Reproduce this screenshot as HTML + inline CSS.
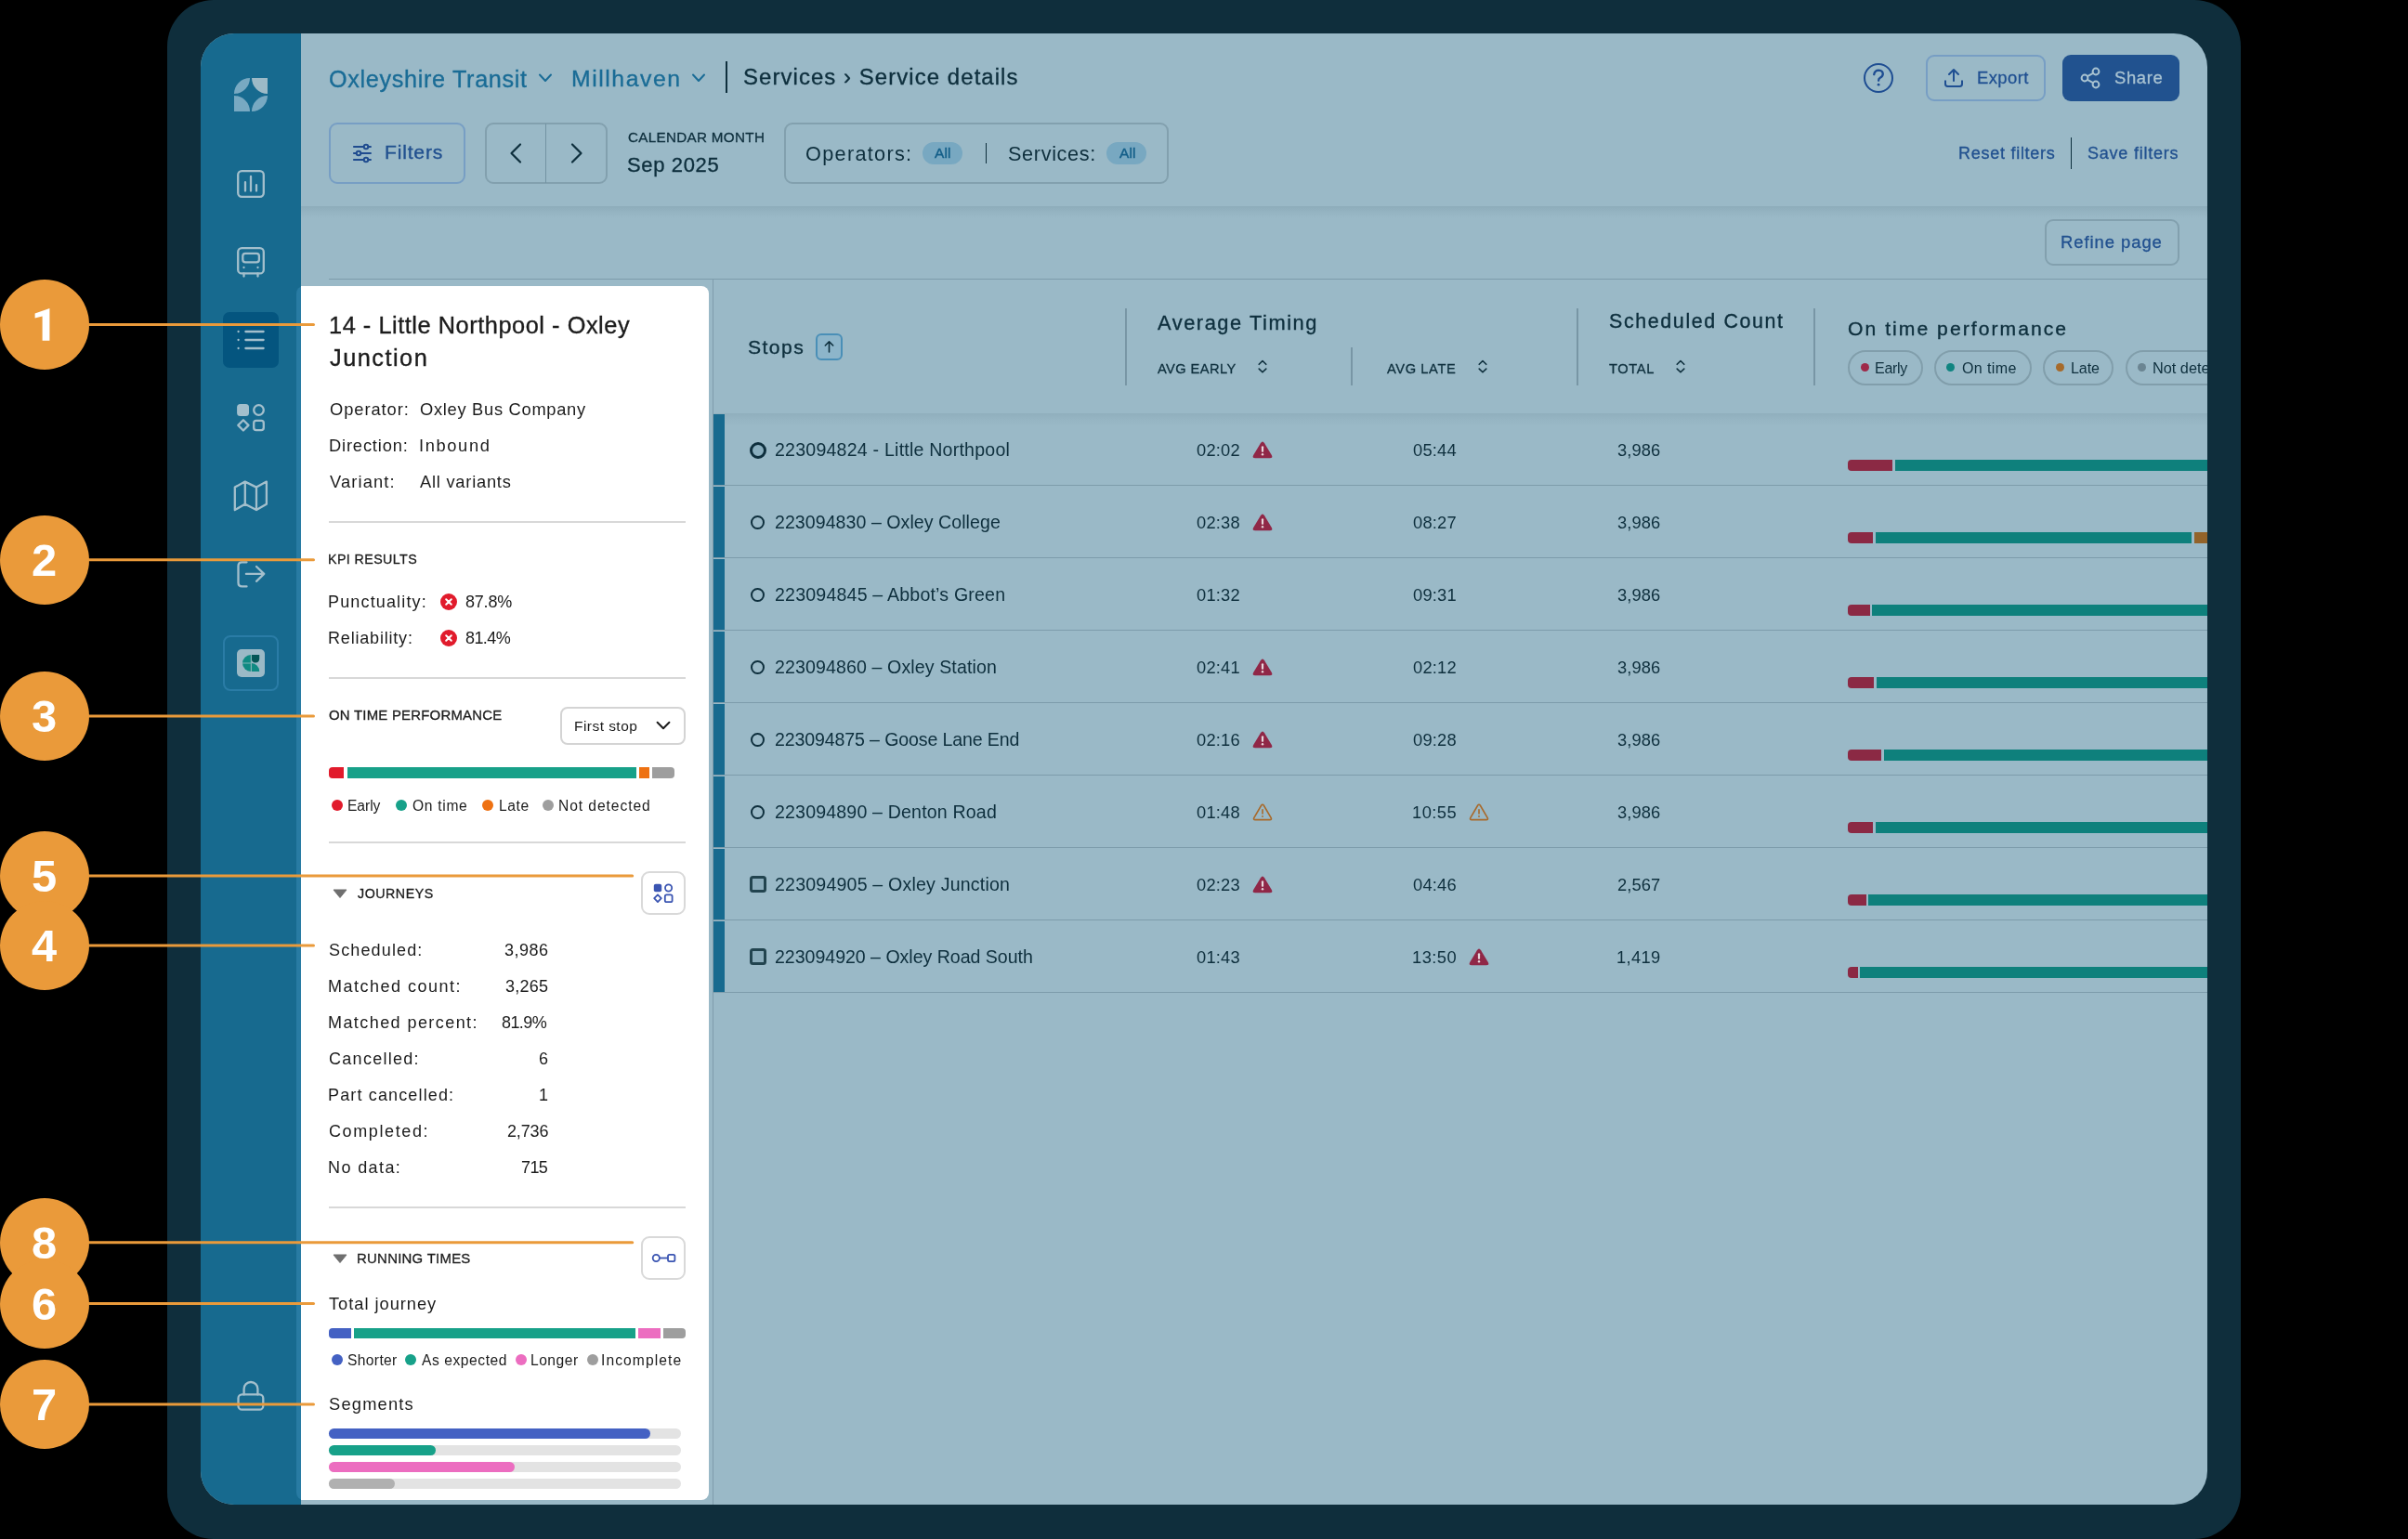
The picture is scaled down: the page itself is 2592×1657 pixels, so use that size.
<!DOCTYPE html>
<html><head><meta charset="utf-8"><title>Service details</title>
<style>
html,body{margin:0;padding:0}
body{width:2592px;height:1657px;background:#000;position:relative;overflow:hidden;font-family:"Liberation Sans",sans-serif}
.a{position:absolute;box-sizing:border-box}
.t{position:absolute;white-space:nowrap;line-height:1;will-change:transform}
svg{position:absolute;overflow:visible}
</style></head><body>

<div class="a" style="left:180px;top:0;width:2232px;height:1657px;background:#0f2e3c;border-radius:50px"></div>
<div class="a" style="left:216px;top:36px;width:2160px;height:1584px;background:#9ab9c7;border-radius:36px;overflow:hidden">
<div class="a" style="left:0;top:0;width:108px;height:1584px;background:#176a8f"></div>
</div>
<div class="a" style="left:324px;top:222px;width:2052px;height:13px;background:linear-gradient(rgba(40,70,85,0.11),rgba(40,70,85,0.05) 45%,rgba(40,70,85,0))"></div>
<div class="t" style="left:353.50px;top:72.52px;font-size:25.21px;color:#1a6c96;letter-spacing:0.668px;-webkit-text-stroke:0.35px #1a6c96">Oxleyshire Transit</div>
<svg style="left:580px;top:79px" width="14" height="10" viewBox="0 0 14 10"><path d="M1 1.5 L7 8 L13 1.5" fill="none" stroke="#1a6c96" stroke-width="2" stroke-linecap="round" stroke-linejoin="round"/></svg>
<div class="t" style="left:615.30px;top:72.78px;font-size:24.79px;color:#1a6c96;letter-spacing:1.545px;-webkit-text-stroke:0.35px #1a6c96">Millhaven</div>
<svg style="left:745px;top:79px" width="14" height="10" viewBox="0 0 14 10"><path d="M1 1.5 L7 8 L13 1.5" fill="none" stroke="#1a6c96" stroke-width="2" stroke-linecap="round" stroke-linejoin="round"/></svg>
<div class="a" style="left:781.4px;top:66px;width:1.3px;height:34px;background:#0e2f3d"></div>
<div class="t" style="left:799.50px;top:71.39px;font-size:23.94px;color:#0e2f3d;letter-spacing:1.070px;-webkit-text-stroke:0.35px #0e2f3d">Services › Service details</div>
<svg style="left:2005px;top:67px" width="34" height="34" viewBox="0 0 34 34"><circle cx="17" cy="17" r="15" fill="none" stroke="#1e4d92" stroke-width="2"/><path d="M12.2 13.2 Q13 8.6 17.3 8.6 Q21.6 8.9 21.8 12.6 Q21.8 15.3 18.8 16.8 Q17.1 17.7 17.1 19.8" fill="none" stroke="#1e4d92" stroke-width="2.3" stroke-linecap="round"/><circle cx="17.1" cy="24.2" r="1.4" fill="#1e4d92"/></svg>
<div class="a" style="left:2073px;top:59px;width:129px;height:50px;border:2px solid #779ec4;border-radius:9px"></div>
<svg style="left:2092px;top:72px" width="22" height="24" viewBox="0 0 22 24"><path d="M11 15 V3 M6 8 L11 3 L16 8" fill="none" stroke="#1f4f92" stroke-width="2" stroke-linecap="round" stroke-linejoin="round"/><path d="M2 14.4 V18.6 Q2 21 4.5 21 H17.5 Q20 21 20 18.6 V14.4" fill="none" stroke="#1f4f92" stroke-width="2" stroke-linecap="butt"/></svg>
<div class="t" style="left:2127.50px;top:75.00px;font-size:18.45px;color:#1f4f91;letter-spacing:0.407px;-webkit-text-stroke:0.3px #1f4f91">Export</div>
<div class="a" style="left:2220px;top:58.7px;width:126px;height:50.5px;background:#21528f;border-radius:9px"></div>
<svg style="left:2238px;top:71px" width="24" height="26" viewBox="0 0 24 26"><circle cx="18" cy="6" r="3.4" fill="none" stroke="#a9c3d1" stroke-width="2"/><circle cx="6" cy="13" r="3.4" fill="none" stroke="#a9c3d1" stroke-width="2"/><circle cx="18" cy="20" r="3.4" fill="none" stroke="#a9c3d1" stroke-width="2"/><path d="M9 11.2 L15 7.8 M9 14.8 L15 18.2" stroke="#a9c3d1" stroke-width="2"/></svg>
<div class="t" style="left:2275.50px;top:75.00px;font-size:18.45px;color:#a9c3d2;letter-spacing:0.639px;-webkit-text-stroke:0.3px #a9c3d2">Share</div>
<div class="a" style="left:354px;top:132px;width:147px;height:65.5px;border:2px solid #779ec4;border-radius:9px"></div>
<svg style="left:378px;top:153px" width="24" height="24" viewBox="0 0 24 24"><g fill="none" stroke="#1f4b8f" stroke-width="1.9" stroke-linecap="round"><path d="M2.9 5 H13.7 M18.3 5 H21 M2.9 12 H5.7 M10.3 12 H21 M2.9 19 H13.7 M18.3 19 H21"/><circle cx="16" cy="5" r="2.3"/><circle cx="8" cy="12" r="2.3"/><circle cx="16" cy="19" r="2.3"/></g></svg>
<div class="t" style="left:414.00px;top:153.25px;font-size:21.13px;color:#21508f;letter-spacing:0.799px;-webkit-text-stroke:0.35px #21508f">Filters</div>
<div class="a" style="left:522.4px;top:132px;width:131.5px;height:65.5px;border:2px solid #82a0ae;border-radius:9px"></div>
<div class="a" style="left:586.7px;top:133px;width:1.5px;height:63.5px;background:#7393a3"></div>
<svg style="left:547px;top:153px" width="16" height="24" viewBox="0 0 16 24"><path d="M13 2.5 L3.5 12 L13 21.5" fill="none" stroke="#0e2f3d" stroke-width="2.2" stroke-linecap="round" stroke-linejoin="round"/></svg>
<svg style="left:613px;top:153px" width="16" height="24" viewBox="0 0 16 24"><path d="M3 2.5 L12.5 12 L3 21.5" fill="none" stroke="#0e2f3d" stroke-width="2.2" stroke-linecap="round" stroke-linejoin="round"/></svg>
<div class="t" style="left:675.50px;top:140.42px;font-size:15.21px;color:#0e2f3d;letter-spacing:0.317px;-webkit-text-stroke:0.3px #0e2f3d">CALENDAR MONTH</div>
<div class="t" style="left:674.50px;top:166.54px;font-size:21.97px;color:#0e2f3d;letter-spacing:0.665px;-webkit-text-stroke:0.35px #0e2f3d">Sep 2025</div>
<div class="a" style="left:843.6px;top:132px;width:414.5px;height:65.5px;border:2px solid #82a0ae;border-radius:9px"></div>
<div class="t" style="left:866.50px;top:154.78px;font-size:21.69px;color:#0e2f3d;letter-spacing:1.297px">Operators:</div>
<div class="a" style="left:993px;top:153.2px;width:43.3px;height:23.5px;background:#78a8c1;border-radius:12px"></div>
<div class="t" style="left:1006.20px;top:156.99px;font-size:15.49px;color:#135e88;letter-spacing:0.116px;-webkit-text-stroke:0.4px #135e88">All</div>
<div class="a" style="left:1060.8px;top:153.8px;width:1.2px;height:21.8px;background:#0e2f3d"></div>
<div class="t" style="left:1085.00px;top:154.78px;font-size:21.69px;color:#0e2f3d;letter-spacing:0.642px">Services:</div>
<div class="a" style="left:1191px;top:153.2px;width:43.3px;height:23.5px;background:#78a8c1;border-radius:12px"></div>
<div class="t" style="left:1204.50px;top:156.99px;font-size:15.49px;color:#135e88;letter-spacing:0.116px;-webkit-text-stroke:0.4px #135e88">All</div>
<div class="t" style="left:2107.50px;top:155.66px;font-size:18.03px;color:#21508f;letter-spacing:0.725px;-webkit-text-stroke:0.3px #21508f">Reset filters</div>
<div class="a" style="left:2229.1px;top:148px;width:1.4px;height:34px;background:#0e2f3d"></div>
<div class="t" style="left:2246.80px;top:155.66px;font-size:18.03px;color:#21508f;letter-spacing:0.763px;-webkit-text-stroke:0.3px #21508f">Save filters</div>
<div class="a" style="left:2201px;top:236px;width:144.5px;height:49.5px;border:2px solid #82a0ae;border-radius:9px"></div>
<div class="t" style="left:2218.40px;top:252.00px;font-size:18.45px;color:#21508f;letter-spacing:0.942px;-webkit-text-stroke:0.3px #21508f">Refine page</div>
<div class="a" style="left:354px;top:300.2px;width:2022px;height:1.2px;background:#7d9cab"></div>
<svg style="left:252px;top:84px" width="36" height="36" viewBox="0 0 36 36"><path d="M0 17 A17 17 0 0 1 17 0 A17 17 0 0 1 0 17Z" fill="#78a9c2"/><path d="M19 0 H36 V17 A17 17 0 0 1 19 0Z" fill="#9dbac7"/><path d="M0 19 A17 17 0 0 1 17 36 H0Z" fill="#78a9c2"/><path d="M19 36 A17 17 0 0 0 36 19 A17 17 0 0 0 19 36Z" fill="#78a9c2"/></svg>
<svg style="left:255px;top:183px" width="30" height="30" viewBox="0 0 30 30"><rect x="1.2" y="1.2" width="27.6" height="27.6" rx="4" fill="none" stroke="#a3bfcc" stroke-width="2.3" stroke-linecap="round" stroke-linejoin="round"/><path d="M9 13.2 V22.6 M15 7 V22.6 M21 16.2 V22.6" fill="none" stroke="#a3bfcc" stroke-width="2.3" stroke-linecap="round" stroke-linejoin="round"/></svg>
<svg style="left:255px;top:266px" width="30" height="33" viewBox="0 0 30 33"><rect x="1.2" y="1.2" width="27.6" height="27.2" rx="4" fill="none" stroke="#a3bfcc" stroke-width="2.3" stroke-linecap="round" stroke-linejoin="round"/><rect x="6.3" y="6.8" width="17.6" height="9.6" rx="2.8" fill="none" stroke="#a3bfcc" stroke-width="2.3" stroke-linecap="round" stroke-linejoin="round"/><path d="M7.5 21.9 V22 M22.5 21.9 V22 M7.5 28.5 V31.5 M22.5 28.5 V31.5" fill="none" stroke="#a3bfcc" stroke-width="2.3" stroke-linecap="round" stroke-linejoin="round"/></svg>
<div class="a" style="left:240px;top:336px;width:60px;height:60px;background:#04557f;border-radius:7px"></div>
<svg style="left:255px;top:355px" width="30" height="21" viewBox="0 0 30 21"><path d="M9.4 2 H28.6 M9.4 11 H28.6 M9.4 20 H28.6" fill="none" stroke="#a3bfcc" stroke-width="2.3" stroke-linecap="round" stroke-linejoin="round"/><path d="M1.6 2 V2.1 M1.6 11 V11.1 M1.6 20 V20.1" fill="none" stroke="#a3bfcc" stroke-width="2.3" stroke-linecap="round" stroke-linejoin="round"/></svg>
<svg style="left:255px;top:435px" width="30" height="30" viewBox="0 0 30 30"><rect x="0.1" y="0" width="12.9" height="12.9" rx="3.5" fill="#a3bfcc"/><circle cx="23.5" cy="6.5" r="5.3" fill="none" stroke="#a3bfcc" stroke-width="2.3" stroke-linecap="round" stroke-linejoin="round"/><path d="M6.9 17.3 L12.5 22.9 L6.9 28.5 L1.3 22.9Z" fill="none" stroke="#a3bfcc" stroke-width="2.3" stroke-linecap="round" stroke-linejoin="round"/><rect x="18.2" y="17.9" width="10.6" height="10.2" rx="2.6" fill="none" stroke="#a3bfcc" stroke-width="2.3" stroke-linecap="round" stroke-linejoin="round"/></svg>
<svg style="left:252px;top:517px" width="37" height="34" viewBox="0 0 37 34"><path d="M0.8 7.6 L11.8 1.6 L24 7.6 L34.9 1.6 V25.7 L24 32.1 L11.8 25.7 L0.8 32.1Z M11.8 1.6 V25.7 M24 7.6 V32.1" fill="none" stroke="#a3bfcc" stroke-width="2.3" stroke-linecap="round" stroke-linejoin="round"/></svg>
<svg style="left:255px;top:604px" width="30" height="30" viewBox="0 0 30 30"><path d="M10.5 1.3 H5.5 Q1.5 1.3 1.5 5.5 V23.2 Q1.5 27.4 5.5 27.4 H10.5" fill="none" stroke="#a3bfcc" stroke-width="2.3" stroke-linecap="round" stroke-linejoin="round"/><path d="M9.9 13.9 H29.2 M21 6 L29.2 13.9 L21 21.8" fill="none" stroke="#a3bfcc" stroke-width="2.3" stroke-linecap="round" stroke-linejoin="round"/></svg>
<div class="a" style="left:240.2px;top:684.2px;width:59.5px;height:59.5px;border:2px solid #2a7ca6;border-radius:8px"></div>
<div class="a" style="left:255px;top:699px;width:30px;height:30px;background:#9bb9c6;border-radius:5px"></div>
<svg style="left:255px;top:699px" width="30" height="30" viewBox="0 0 30 30"><path d="M15 6 V24 A9 9 0 0 1 15 6Z" fill="#0f8a82"/><path d="M15.8 24 V15 A9 9 0 0 1 24.2 24Z" fill="#0f8a82"/><path d="M15.8 6 H24.2 V10.5 A4.3 4.3 0 0 1 19.9 14.5 A4.2 4.2 0 0 1 15.8 10.3Z" fill="#045656"/><path d="M6 15 H15.4 M15.4 6 V24" stroke="#7fb3b5" stroke-width="1.2"/></svg>
<svg style="left:255px;top:1486px" width="30" height="34" viewBox="0 0 30 34"><path d="M7.6 15.4 V9.4 A7.4 7.4 0 0 1 22.4 9.4 V15.4" fill="none" stroke="#a3bfcc" stroke-width="2.3" stroke-linecap="round" stroke-linejoin="round"/><rect x="1.5" y="15.4" width="26.8" height="16.3" rx="4" fill="none" stroke="#a3bfcc" stroke-width="2.3" stroke-linecap="round" stroke-linejoin="round"/></svg>
<div class="a" style="left:766.7px;top:301px;width:1.6px;height:1319px;background:#7e9cab"></div>
<div class="t" style="left:804.80px;top:363.35px;font-size:21.13px;color:#0e2f3d;letter-spacing:1.444px;-webkit-text-stroke:0.35px #0e2f3d">Stops</div>
<div class="a" style="left:877.7px;top:359px;width:29.5px;height:29px;border:2px solid #4a8fb7;background:#8db5ca;border-radius:6px"></div>
<svg style="left:882px;top:363px" width="21" height="21" viewBox="0 0 21 21"><path d="M10.5 16 V4.8 M6.3 9 L10.5 4.8 L14.7 9" fill="none" stroke="#0e2f3d" stroke-width="1.6" stroke-linecap="round" stroke-linejoin="round"/></svg>
<div class="a" style="left:1211.3px;top:331.5px;width:1.6px;height:83.80000000000001px;background:#7896a5"></div>
<div class="a" style="left:1454.3px;top:373.7px;width:1.6px;height:41.60000000000002px;background:#7896a5"></div>
<div class="a" style="left:1697px;top:331.5px;width:1.6px;height:83.80000000000001px;background:#7896a5"></div>
<div class="a" style="left:1952.1px;top:331.5px;width:1.6px;height:83.80000000000001px;background:#7896a5"></div>
<div class="t" style="left:1246.00px;top:336.66px;font-size:21.83px;color:#0e2f3d;letter-spacing:1.545px;-webkit-text-stroke:0.35px #0e2f3d">Average Timing</div>
<div class="t" style="left:1246.00px;top:389.90px;font-size:14.65px;color:#0e2f3d;letter-spacing:0.427px;-webkit-text-stroke:0.3px #0e2f3d">AVG EARLY</div>
<div class="t" style="left:1493.20px;top:389.90px;font-size:14.65px;color:#0e2f3d;letter-spacing:0.615px;-webkit-text-stroke:0.3px #0e2f3d">AVG LATE</div>
<div class="t" style="left:1731.50px;top:336.42px;font-size:21.41px;color:#0e2f3d;letter-spacing:1.630px;-webkit-text-stroke:0.35px #0e2f3d">Scheduled Count</div>
<div class="t" style="left:1731.50px;top:389.90px;font-size:14.65px;color:#0e2f3d;letter-spacing:0.638px;-webkit-text-stroke:0.3px #0e2f3d">TOTAL</div>
<svg style="left:1353.0px;top:387.2px" width="12" height="16" viewBox="0 0 12 16"><path d="M2.2 5.3 L6 1.5 L9.8 5.3 M2.2 10.1 L6 13.8 L9.8 10.1" fill="none" stroke="#0e2f3d" stroke-width="1.6" stroke-linecap="round" stroke-linejoin="round"/></svg>
<svg style="left:1590.0px;top:387.2px" width="12" height="16" viewBox="0 0 12 16"><path d="M2.2 5.3 L6 1.5 L9.8 5.3 M2.2 10.1 L6 13.8 L9.8 10.1" fill="none" stroke="#0e2f3d" stroke-width="1.6" stroke-linecap="round" stroke-linejoin="round"/></svg>
<svg style="left:1803.2px;top:387.2px" width="12" height="16" viewBox="0 0 12 16"><path d="M2.2 5.3 L6 1.5 L9.8 5.3 M2.2 10.1 L6 13.8 L9.8 10.1" fill="none" stroke="#0e2f3d" stroke-width="1.6" stroke-linecap="round" stroke-linejoin="round"/></svg>
<div class="t" style="left:1988.70px;top:342.55px;font-size:21.13px;color:#0e2f3d;letter-spacing:2.037px;-webkit-text-stroke:0.35px #0e2f3d">On time performance</div>
<div class="a" style="left:1980px;top:370px;width:396px;height:50px;overflow:hidden">
<div class="a" style="left:9.300000000000045px;top:6.8px;width:80.29999999999977px;height:38.4px;border:2px solid #819eab;border-radius:19.2px"></div>
<div class="a" style="left:22.799999999999955px;top:21.30000000000001px;width:9px;height:9px;background:#9e2949;border-radius:50%"></div>
<div class="t" style="left:38.40px;top:17.91px;font-size:16.06px;color:#0e2f3d;letter-spacing:-0.309px">Early</div>
<div class="a" style="left:102.29999999999981px;top:6.8px;width:104.60000000000018px;height:38.4px;border:2px solid #819eab;border-radius:19.2px"></div>
<div class="a" style="left:115.19999999999982px;top:21.30000000000001px;width:9px;height:9px;background:#0f8480;border-radius:50%"></div>
<div class="t" style="left:132.20px;top:17.91px;font-size:16.06px;color:#0e2f3d;letter-spacing:0.357px">On time</div>
<div class="a" style="left:219.00000000000009px;top:6.8px;width:76.20000000000009px;height:38.4px;border:2px solid #819eab;border-radius:19.2px"></div>
<div class="a" style="left:232.5px;top:21.30000000000001px;width:9px;height:9px;background:#a66a2a;border-radius:50%"></div>
<div class="t" style="left:248.50px;top:17.91px;font-size:16.06px;color:#0e2f3d;letter-spacing:-0.069px">Late</div>
<div class="a" style="left:307.5000000000001px;top:6.8px;width:152.89999999999992px;height:38.4px;border:2px solid #819eab;border-radius:19.2px"></div>
<div class="a" style="left:320.8000000000002px;top:21.30000000000001px;width:9px;height:9px;background:#6b8592;border-radius:50%"></div>
<div class="t" style="left:336.80px;top:17.71px;font-size:16.30px;color:#0e2f3d">Not detected</div>
</div>
<div class="a" style="left:768px;top:445px;width:1608px;height:14px;background:linear-gradient(rgba(40,70,85,0.09),rgba(40,70,85,0.04) 45%,rgba(40,70,85,0))"></div>
<div class="a" style="left:767.5px;top:445.5px;width:12.5px;height:76.9px;background:#176a8f"></div>
<div class="a" style="left:767px;top:522.1px;width:1609px;height:1.3px;background:#7d9cab"></div>
<div class="a" style="left:807px;top:475.5px;width:18px;height:18px;border:3.2px solid #0e2f3d;background:#8aaebe;border-radius:50%"></div>
<div class="t" style="left:833.80px;top:474.75px;font-size:19.58px;color:#0e2f3d;letter-spacing:0.214px">223094824 - Little Northpool</div>
<div class="t" style="left:1288.00px;top:475.82px;font-size:18.31px;color:#0e2f3d;letter-spacing:0.222px">02:02</div>
<svg style="left:1348.2px;top:475.3px" width="22" height="19" viewBox="0 0 22 19"><path d="M8.9 2.2 Q11 -1.1 13.1 2.2 L20.8 15 Q22.6 18.3 18.8 18.3 H3.2 Q-0.6 18.3 1.2 15Z" fill="#902747"/><path d="M11 6.3 V10.8" stroke="#e8d7dc" stroke-width="2.2" stroke-linecap="round"/><circle cx="11" cy="14.3" r="1.2" fill="#e8d7dc"/></svg>
<div class="t" style="left:1520.50px;top:475.82px;font-size:18.31px;color:#0e2f3d;letter-spacing:0.222px">05:44</div>
<div class="t" style="left:1741.20px;top:475.82px;font-size:18.31px;color:#0e2f3d;letter-spacing:0.097px">3,986</div>
<div class="a" style="left:1989px;top:495px;width:48.4px;height:11.5px;background:#8b2944;border-radius:4px 0 0 4px"></div>
<div class="a" style="left:2040.0px;top:495px;width:336.0px;height:11.5px;background:#0e807c"></div>
<div class="a" style="left:767.5px;top:523.5px;width:12.5px;height:76.9px;background:#176a8f"></div>
<div class="a" style="left:767px;top:600.1px;width:1609px;height:1.3px;background:#7d9cab"></div>
<div class="a" style="left:808.4px;top:555.2px;width:14.8px;height:14.8px;border:2px solid #0e2f3d;border-radius:50%"></div>
<div class="t" style="left:833.80px;top:552.75px;font-size:19.58px;color:#0e2f3d;letter-spacing:0.047px">223094830 – Oxley College</div>
<div class="t" style="left:1288.00px;top:553.82px;font-size:18.31px;color:#0e2f3d;letter-spacing:0.222px">02:38</div>
<svg style="left:1348.2px;top:553.3px" width="22" height="19" viewBox="0 0 22 19"><path d="M8.9 2.2 Q11 -1.1 13.1 2.2 L20.8 15 Q22.6 18.3 18.8 18.3 H3.2 Q-0.6 18.3 1.2 15Z" fill="#902747"/><path d="M11 6.3 V10.8" stroke="#e8d7dc" stroke-width="2.2" stroke-linecap="round"/><circle cx="11" cy="14.3" r="1.2" fill="#e8d7dc"/></svg>
<div class="t" style="left:1520.50px;top:553.82px;font-size:18.31px;color:#0e2f3d;letter-spacing:0.222px">08:27</div>
<div class="t" style="left:1741.20px;top:553.82px;font-size:18.31px;color:#0e2f3d;letter-spacing:0.097px">3,986</div>
<div class="a" style="left:1989px;top:573px;width:27px;height:11.5px;background:#8b2944;border-radius:4px 0 0 4px"></div>
<div class="a" style="left:2018.6px;top:573px;width:340.80000000000007px;height:11.5px;background:#0e807c"></div>
<div class="a" style="left:2362.2px;top:573px;width:13.8px;height:11.5px;background:#92632a"></div>
<div class="a" style="left:767.5px;top:601.5px;width:12.5px;height:76.9px;background:#176a8f"></div>
<div class="a" style="left:767px;top:678.1px;width:1609px;height:1.3px;background:#7d9cab"></div>
<div class="a" style="left:808.4px;top:633.2px;width:14.8px;height:14.8px;border:2px solid #0e2f3d;border-radius:50%"></div>
<div class="t" style="left:833.80px;top:630.75px;font-size:19.58px;color:#0e2f3d;letter-spacing:0.192px">223094845 – Abbot’s Green</div>
<div class="t" style="left:1288.00px;top:631.82px;font-size:18.31px;color:#0e2f3d;letter-spacing:0.222px">01:32</div>
<div class="t" style="left:1520.50px;top:631.82px;font-size:18.31px;color:#0e2f3d;letter-spacing:0.222px">09:31</div>
<div class="t" style="left:1741.20px;top:631.82px;font-size:18.31px;color:#0e2f3d;letter-spacing:0.097px">3,986</div>
<div class="a" style="left:1989px;top:651px;width:23.8px;height:11.5px;background:#8b2944;border-radius:4px 0 0 4px"></div>
<div class="a" style="left:2015.3999999999999px;top:651px;width:360.59999999999997px;height:11.5px;background:#0e807c"></div>
<div class="a" style="left:767.5px;top:679.5px;width:12.5px;height:76.9px;background:#176a8f"></div>
<div class="a" style="left:767px;top:756.1px;width:1609px;height:1.3px;background:#7d9cab"></div>
<div class="a" style="left:808.4px;top:711.2px;width:14.8px;height:14.8px;border:2px solid #0e2f3d;border-radius:50%"></div>
<div class="t" style="left:833.80px;top:708.75px;font-size:19.58px;color:#0e2f3d;letter-spacing:0.107px">223094860 – Oxley Station</div>
<div class="t" style="left:1288.00px;top:709.82px;font-size:18.31px;color:#0e2f3d;letter-spacing:0.222px">02:41</div>
<svg style="left:1348.2px;top:709.3px" width="22" height="19" viewBox="0 0 22 19"><path d="M8.9 2.2 Q11 -1.1 13.1 2.2 L20.8 15 Q22.6 18.3 18.8 18.3 H3.2 Q-0.6 18.3 1.2 15Z" fill="#902747"/><path d="M11 6.3 V10.8" stroke="#e8d7dc" stroke-width="2.2" stroke-linecap="round"/><circle cx="11" cy="14.3" r="1.2" fill="#e8d7dc"/></svg>
<div class="t" style="left:1520.50px;top:709.82px;font-size:18.31px;color:#0e2f3d;letter-spacing:0.222px">02:12</div>
<div class="t" style="left:1741.20px;top:709.82px;font-size:18.31px;color:#0e2f3d;letter-spacing:0.097px">3,986</div>
<div class="a" style="left:1989px;top:729px;width:28.4px;height:11.5px;background:#8b2944;border-radius:4px 0 0 4px"></div>
<div class="a" style="left:2020.0px;top:729px;width:356.0px;height:11.5px;background:#0e807c"></div>
<div class="a" style="left:767.5px;top:757.5px;width:12.5px;height:76.9px;background:#176a8f"></div>
<div class="a" style="left:767px;top:834.1px;width:1609px;height:1.3px;background:#7d9cab"></div>
<div class="a" style="left:808.4px;top:789.2px;width:14.8px;height:14.8px;border:2px solid #0e2f3d;border-radius:50%"></div>
<div class="t" style="left:833.80px;top:786.75px;font-size:19.58px;color:#0e2f3d;letter-spacing:-0.133px">223094875 – Goose Lane End</div>
<div class="t" style="left:1288.00px;top:787.82px;font-size:18.31px;color:#0e2f3d;letter-spacing:0.222px">02:16</div>
<svg style="left:1348.2px;top:787.3px" width="22" height="19" viewBox="0 0 22 19"><path d="M8.9 2.2 Q11 -1.1 13.1 2.2 L20.8 15 Q22.6 18.3 18.8 18.3 H3.2 Q-0.6 18.3 1.2 15Z" fill="#902747"/><path d="M11 6.3 V10.8" stroke="#e8d7dc" stroke-width="2.2" stroke-linecap="round"/><circle cx="11" cy="14.3" r="1.2" fill="#e8d7dc"/></svg>
<div class="t" style="left:1520.50px;top:787.82px;font-size:18.31px;color:#0e2f3d;letter-spacing:0.222px">09:28</div>
<div class="t" style="left:1741.20px;top:787.82px;font-size:18.31px;color:#0e2f3d;letter-spacing:0.097px">3,986</div>
<div class="a" style="left:1989px;top:807px;width:36.3px;height:11.5px;background:#8b2944;border-radius:4px 0 0 4px"></div>
<div class="a" style="left:2027.8999999999999px;top:807px;width:348.09999999999997px;height:11.5px;background:#0e807c"></div>
<div class="a" style="left:767.5px;top:835.5px;width:12.5px;height:76.9px;background:#176a8f"></div>
<div class="a" style="left:767px;top:912.1px;width:1609px;height:1.3px;background:#7d9cab"></div>
<div class="a" style="left:808.4px;top:867.2px;width:14.8px;height:14.8px;border:2px solid #0e2f3d;border-radius:50%"></div>
<div class="t" style="left:833.80px;top:864.75px;font-size:19.58px;color:#0e2f3d;letter-spacing:0.165px">223094890 – Denton Road</div>
<div class="t" style="left:1288.00px;top:865.82px;font-size:18.31px;color:#0e2f3d;letter-spacing:0.222px">01:48</div>
<svg style="left:1348.2px;top:865.3px" width="22" height="19" viewBox="0 0 22 19"><path d="M9.6 2.3 Q11 0.3 12.4 2.3 L20.2 15.6 Q21.2 17.6 18.9 17.6 H3.1 Q0.8 17.6 1.8 15.6Z" fill="none" stroke="#a8692a" stroke-width="1.6"/><path d="M11 6.8 V11" stroke="#a8692a" stroke-width="1.6" stroke-linecap="round"/><circle cx="11" cy="14" r="0.9" fill="#a8692a"/></svg>
<div class="t" style="left:1519.50px;top:865.82px;font-size:18.31px;color:#0e2f3d;letter-spacing:0.472px">10:55</div>
<svg style="left:1580.8px;top:865.3px" width="22" height="19" viewBox="0 0 22 19"><path d="M9.6 2.3 Q11 0.3 12.4 2.3 L20.2 15.6 Q21.2 17.6 18.9 17.6 H3.1 Q0.8 17.6 1.8 15.6Z" fill="none" stroke="#a8692a" stroke-width="1.6"/><path d="M11 6.8 V11" stroke="#a8692a" stroke-width="1.6" stroke-linecap="round"/><circle cx="11" cy="14" r="0.9" fill="#a8692a"/></svg>
<div class="t" style="left:1741.20px;top:865.82px;font-size:18.31px;color:#0e2f3d;letter-spacing:0.097px">3,986</div>
<div class="a" style="left:1989px;top:885px;width:27px;height:11.5px;background:#8b2944;border-radius:4px 0 0 4px"></div>
<div class="a" style="left:2018.6px;top:885px;width:357.4px;height:11.5px;background:#0e807c"></div>
<div class="a" style="left:767.5px;top:913.5px;width:12.5px;height:76.9px;background:#176a8f"></div>
<div class="a" style="left:767px;top:990.1px;width:1609px;height:1.3px;background:#7d9cab"></div>
<div class="a" style="left:807px;top:942.9px;width:18px;height:18.2px;border:3px solid #22444f;background:#8aacbb;border-radius:3.5px"></div>
<div class="t" style="left:833.80px;top:942.75px;font-size:19.58px;color:#0e2f3d;letter-spacing:0.192px">223094905 – Oxley Junction</div>
<div class="t" style="left:1288.00px;top:943.82px;font-size:18.31px;color:#0e2f3d;letter-spacing:0.222px">02:23</div>
<svg style="left:1348.2px;top:943.3px" width="22" height="19" viewBox="0 0 22 19"><path d="M8.9 2.2 Q11 -1.1 13.1 2.2 L20.8 15 Q22.6 18.3 18.8 18.3 H3.2 Q-0.6 18.3 1.2 15Z" fill="#902747"/><path d="M11 6.3 V10.8" stroke="#e8d7dc" stroke-width="2.2" stroke-linecap="round"/><circle cx="11" cy="14.3" r="1.2" fill="#e8d7dc"/></svg>
<div class="t" style="left:1520.50px;top:943.82px;font-size:18.31px;color:#0e2f3d;letter-spacing:0.222px">04:46</div>
<div class="t" style="left:1741.20px;top:943.82px;font-size:18.31px;color:#0e2f3d;letter-spacing:0.097px">2,567</div>
<div class="a" style="left:1989px;top:963px;width:19.6px;height:11.5px;background:#8b2944;border-radius:4px 0 0 4px"></div>
<div class="a" style="left:2011.1999999999998px;top:963px;width:364.79999999999995px;height:11.5px;background:#0e807c"></div>
<div class="a" style="left:767.5px;top:991.5px;width:12.5px;height:76.9px;background:#176a8f"></div>
<div class="a" style="left:767px;top:1068.1px;width:1609px;height:1.3px;background:#7d9cab"></div>
<div class="a" style="left:807px;top:1020.9px;width:18px;height:18.2px;border:3px solid #22444f;background:#8aacbb;border-radius:3.5px"></div>
<div class="t" style="left:833.80px;top:1020.75px;font-size:19.58px;color:#0e2f3d;letter-spacing:-0.032px">223094920 – Oxley Road South</div>
<div class="t" style="left:1288.00px;top:1021.82px;font-size:18.31px;color:#0e2f3d;letter-spacing:0.222px">01:43</div>
<div class="t" style="left:1519.50px;top:1021.82px;font-size:18.31px;color:#0e2f3d;letter-spacing:0.472px">13:50</div>
<svg style="left:1580.8px;top:1021.3px" width="22" height="19" viewBox="0 0 22 19"><path d="M8.9 2.2 Q11 -1.1 13.1 2.2 L20.8 15 Q22.6 18.3 18.8 18.3 H3.2 Q-0.6 18.3 1.2 15Z" fill="#902747"/><path d="M11 6.3 V10.8" stroke="#e8d7dc" stroke-width="2.2" stroke-linecap="round"/><circle cx="11" cy="14.3" r="1.2" fill="#e8d7dc"/></svg>
<div class="t" style="left:1740.20px;top:1021.82px;font-size:18.31px;color:#0e2f3d;letter-spacing:0.347px">1,419</div>
<div class="a" style="left:1989px;top:1041px;width:10.5px;height:11.5px;background:#8b2944;border-radius:4px 0 0 4px"></div>
<div class="a" style="left:2002.1px;top:1041px;width:373.9px;height:11.5px;background:#0e807c"></div>
<div class="a" style="left:319px;top:308px;width:10px;height:1307px;background:#287ba3;border-radius:8px 0 0 8px"></div>
<div class="a" style="left:324px;top:308px;width:439px;height:1307px;background:#fff;border-radius:0 8px 8px 0"></div>
<div class="t" style="left:353.80px;top:337.50px;font-size:25.35px;color:#1c1c1c;letter-spacing:0.539px;-webkit-text-stroke:0.35px #1c1c1c">14 - Little Northpool - Oxley</div>
<div class="t" style="left:354.80px;top:373.30px;font-size:25.35px;color:#1c1c1c;letter-spacing:1.486px;-webkit-text-stroke:0.35px #1c1c1c">Junction</div>
<div class="t" style="left:354.80px;top:432.12px;font-size:18.31px;color:#1c1c1c;letter-spacing:0.937px">Operator:</div>
<div class="t" style="left:451.90px;top:432.12px;font-size:18.31px;color:#1c1c1c;letter-spacing:0.711px">Oxley Bus Company</div>
<div class="t" style="left:353.80px;top:470.92px;font-size:18.31px;color:#1c1c1c;letter-spacing:0.834px">Direction:</div>
<div class="t" style="left:450.90px;top:470.92px;font-size:18.31px;color:#1c1c1c;letter-spacing:1.623px">Inbound</div>
<div class="t" style="left:354.80px;top:509.82px;font-size:18.31px;color:#1c1c1c;letter-spacing:1.112px">Variant:</div>
<div class="t" style="left:451.90px;top:509.82px;font-size:18.31px;color:#1c1c1c;letter-spacing:0.760px">All variants</div>
<div class="a" style="left:353.8px;top:561px;width:384px;height:1.6px;background:#d8d8d8"></div>
<div class="t" style="left:352.80px;top:595.45px;font-size:14.23px;color:#1c1c1c;letter-spacing:0.429px;-webkit-text-stroke:0.3px #1c1c1c">KPI RESULTS</div>
<div class="t" style="left:352.80px;top:638.86px;font-size:18.03px;color:#1c1c1c;letter-spacing:1.143px">Punctuality:</div>
<svg style="left:474px;top:638.9px" width="18" height="18" viewBox="0 0 18 18"><circle cx="9" cy="9" r="9" fill="#e11b2c"/><path d="M6.2 6.2 L11.8 11.8 M11.8 6.2 L6.2 11.8" stroke="#fff" stroke-width="2" stroke-linecap="round"/></svg>
<div class="t" style="left:501.20px;top:638.86px;font-size:18.03px;color:#1c1c1c;letter-spacing:-0.216px">87.8%</div>
<div class="t" style="left:352.80px;top:677.86px;font-size:18.03px;color:#1c1c1c;letter-spacing:0.801px">Reliability:</div>
<svg style="left:474px;top:678.2px" width="18" height="18" viewBox="0 0 18 18"><circle cx="9" cy="9" r="9" fill="#e11b2c"/><path d="M6.2 6.2 L11.8 11.8 M11.8 6.2 L6.2 11.8" stroke="#fff" stroke-width="2" stroke-linecap="round"/></svg>
<div class="t" style="left:501.20px;top:677.86px;font-size:18.03px;color:#1c1c1c;letter-spacing:-0.600px">81.4%</div>
<div class="a" style="left:353.8px;top:729px;width:384px;height:1.6px;background:#d8d8d8"></div>
<div class="t" style="left:353.80px;top:763.26px;font-size:14.93px;color:#1c1c1c;letter-spacing:0.230px;-webkit-text-stroke:0.3px #1c1c1c">ON TIME PERFORMANCE</div>
<div class="a" style="left:603px;top:760.8px;width:135px;height:41px;border:2px solid #d4d4d4;border-radius:8px"></div>
<div class="t" style="left:617.50px;top:774.39px;font-size:15.49px;color:#1c1c1c;letter-spacing:0.460px">First stop</div>
<svg style="left:705px;top:775px" width="18" height="13" viewBox="0 0 18 13"><path d="M2.6 2.8 L9 9.2 L15.4 2.8" fill="none" stroke="#1c1c1c" stroke-width="2" stroke-linecap="round" stroke-linejoin="round"/></svg>
<div class="a" style="left:353.8px;top:826.4px;width:16.6px;height:12px;background:#e11b2c;border-radius:4px 0 0 4px"></div>
<div class="a" style="left:373.6px;top:826.4px;width:311.6px;height:12px;background:#17a189"></div>
<div class="a" style="left:688.4px;top:826.4px;width:10.4px;height:12px;background:#ee7112"></div>
<div class="a" style="left:702px;top:826.4px;width:23.7px;height:12px;background:#9e9e9e;border-radius:0 4px 4px 0"></div>
<div class="a" style="left:356.8px;top:861.2px;width:12px;height:12px;background:#e11b2c;border-radius:50%"></div>
<div class="t" style="left:374.30px;top:860.17px;font-size:15.63px;color:#1c1c1c;letter-spacing:-0.047px">Early</div>
<div class="a" style="left:426px;top:861.2px;width:12px;height:12px;background:#17a189;border-radius:50%"></div>
<div class="t" style="left:444.40px;top:860.17px;font-size:15.63px;color:#1c1c1c;letter-spacing:0.681px">On time</div>
<div class="a" style="left:519px;top:861.2px;width:12px;height:12px;background:#ee7112;border-radius:50%"></div>
<div class="t" style="left:536.50px;top:860.17px;font-size:15.63px;color:#1c1c1c;letter-spacing:0.593px">Late</div>
<div class="a" style="left:583.5px;top:861.2px;width:12px;height:12px;background:#9e9e9e;border-radius:50%"></div>
<div class="t" style="left:600.70px;top:860.17px;font-size:15.63px;color:#1c1c1c;letter-spacing:0.926px">Not detected</div>
<div class="a" style="left:353.8px;top:906px;width:384px;height:1.6px;background:#d8d8d8"></div>
<svg style="left:358px;top:957px" width="16" height="10" viewBox="0 0 16 10"><path d="M1 1 H15 L8 9.5Z" fill="#6f6f6f" stroke="#6f6f6f" stroke-width="1" stroke-linejoin="round"/></svg>
<div class="t" style="left:384.70px;top:955.45px;font-size:14.23px;color:#1c1c1c;letter-spacing:0.537px;-webkit-text-stroke:0.3px #1c1c1c">JOURNEYS</div>
<div class="a" style="left:690.1px;top:938.2px;width:47.5px;height:46.6px;border:2px solid #d9d9d9;border-radius:9px"></div>
<svg style="left:703px;top:951px" width="22" height="22" viewBox="0 0 22 22"><rect x="0.8" y="0.8" width="8.4" height="8.4" rx="2" fill="#3b55b2"/><circle cx="16.6" cy="5" r="3.6" fill="none" stroke="#3b55b2" stroke-width="1.8"/><path d="M5 12.3 L8.8 16.2 L5 20.1 L1.2 16.2Z" fill="none" stroke="#3b55b2" stroke-width="1.8" stroke-linejoin="round"/><rect x="12.8" y="12.4" width="7.8" height="7.8" rx="1.8" fill="none" stroke="#3b55b2" stroke-width="1.8"/></svg>
<div class="t" style="left:353.80px;top:1013.76px;font-size:18.03px;color:#1c1c1c;letter-spacing:1.129px">Scheduled:</div>
<div class="t" style="left:543.20px;top:1013.76px;font-size:18.03px;color:#1c1c1c;letter-spacing:0.459px">3,986</div>
<div class="t" style="left:352.80px;top:1052.76px;font-size:18.03px;color:#1c1c1c;letter-spacing:1.487px">Matched count:</div>
<div class="t" style="left:544.00px;top:1052.76px;font-size:18.03px;color:#1c1c1c;letter-spacing:0.259px">3,265</div>
<div class="t" style="left:352.80px;top:1091.76px;font-size:18.03px;color:#1c1c1c;letter-spacing:1.420px">Matched percent:</div>
<div class="t" style="left:540.24px;top:1091.76px;font-size:18.03px;color:#1c1c1c;letter-spacing:-0.600px">81.9%</div>
<div class="t" style="left:353.80px;top:1130.76px;font-size:18.03px;color:#1c1c1c;letter-spacing:1.276px">Cancelled:</div>
<div class="t" style="left:580.10px;top:1130.76px;font-size:18.03px;color:#1c1c1c">6</div>
<div class="t" style="left:352.80px;top:1169.76px;font-size:18.03px;color:#1c1c1c;letter-spacing:1.138px">Part cancelled:</div>
<div class="t" style="left:580.10px;top:1169.76px;font-size:18.03px;color:#1c1c1c">1</div>
<div class="t" style="left:353.80px;top:1208.76px;font-size:18.03px;color:#1c1c1c;letter-spacing:1.598px">Completed:</div>
<div class="t" style="left:545.70px;top:1208.76px;font-size:18.03px;color:#1c1c1c;letter-spacing:-0.166px">2,736</div>
<div class="t" style="left:352.80px;top:1247.76px;font-size:18.03px;color:#1c1c1c;letter-spacing:1.386px">No data:</div>
<div class="t" style="left:561.26px;top:1247.76px;font-size:18.03px;color:#1c1c1c;letter-spacing:-0.600px">715</div>
<div class="a" style="left:353.8px;top:1299px;width:384px;height:1.6px;background:#d8d8d8"></div>
<svg style="left:358px;top:1350px" width="16" height="10" viewBox="0 0 16 10"><path d="M1 1 H15 L8 9.5Z" fill="#6f6f6f" stroke="#6f6f6f" stroke-width="1" stroke-linejoin="round"/></svg>
<div class="t" style="left:383.70px;top:1348.16px;font-size:14.93px;color:#1c1c1c;letter-spacing:0.266px;-webkit-text-stroke:0.3px #1c1c1c">RUNNING TIMES</div>
<div class="a" style="left:690.1px;top:1331px;width:47.5px;height:46.8px;border:2px solid #d9d9d9;border-radius:9px"></div>
<svg style="left:701px;top:1348px" width="27" height="13" viewBox="0 0 27 13"><circle cx="5.3" cy="6.5" r="3.6" fill="none" stroke="#3b55b2" stroke-width="1.8"/><path d="M9 6.5 H18" stroke="#3b55b2" stroke-width="1.8"/><rect x="18" y="2.8" width="7.4" height="7.4" rx="1.6" fill="none" stroke="#3b55b2" stroke-width="1.8"/></svg>
<div class="t" style="left:353.80px;top:1394.72px;font-size:18.31px;color:#1c1c1c;letter-spacing:0.959px">Total journey</div>
<div class="a" style="left:353.8px;top:1429.6px;width:24px;height:11.5px;background:#4461c3;border-radius:4px 0 0 4px"></div>
<div class="a" style="left:381px;top:1429.6px;width:303px;height:11.5px;background:#17a189"></div>
<div class="a" style="left:687.2px;top:1429.6px;width:23.4px;height:11.5px;background:#ec6dc0"></div>
<div class="a" style="left:714px;top:1429.6px;width:23.8px;height:11.5px;background:#9e9e9e;border-radius:0 4px 4px 0"></div>
<div class="a" style="left:356.8px;top:1458.4px;width:12px;height:12px;background:#4461c3;border-radius:50%"></div>
<div class="t" style="left:373.60px;top:1457.27px;font-size:15.63px;color:#1c1c1c;letter-spacing:0.344px">Shorter</div>
<div class="a" style="left:436.3px;top:1458.4px;width:12px;height:12px;background:#17a189;border-radius:50%"></div>
<div class="t" style="left:453.60px;top:1457.27px;font-size:15.63px;color:#1c1c1c;letter-spacing:0.550px">As expected</div>
<div class="a" style="left:554.8px;top:1458.4px;width:12px;height:12px;background:#ec6dc0;border-radius:50%"></div>
<div class="t" style="left:570.60px;top:1457.27px;font-size:15.63px;color:#1c1c1c;letter-spacing:0.490px">Longer</div>
<div class="a" style="left:631.6px;top:1458.4px;width:12px;height:12px;background:#9e9e9e;border-radius:50%"></div>
<div class="t" style="left:647.10px;top:1457.27px;font-size:15.63px;color:#1c1c1c;letter-spacing:1.084px">Incomplete</div>
<div class="t" style="left:353.80px;top:1502.62px;font-size:18.31px;color:#1c1c1c;letter-spacing:1.195px">Segments</div>
<div class="a" style="left:353.8px;top:1537.8px;width:379.5px;height:11.5px;background:#e3e3e3;border-radius:6px"></div>
<div class="a" style="left:353.8px;top:1537.8px;width:346.7px;height:11.5px;background:#4461c3;border-radius:6px"></div>
<div class="a" style="left:353.8px;top:1555.6px;width:379.5px;height:11.5px;background:#e3e3e3;border-radius:6px"></div>
<div class="a" style="left:353.8px;top:1555.6px;width:115.59999999999997px;height:11.5px;background:#17a189;border-radius:6px"></div>
<div class="a" style="left:353.8px;top:1573.6px;width:379.5px;height:11.5px;background:#e3e3e3;border-radius:6px"></div>
<div class="a" style="left:353.8px;top:1573.6px;width:199.8px;height:11.5px;background:#ec6dc0;border-radius:6px"></div>
<div class="a" style="left:353.8px;top:1591.6px;width:379.5px;height:11.5px;background:#e3e3e3;border-radius:6px"></div>
<div class="a" style="left:353.8px;top:1591.6px;width:70.89999999999998px;height:11.5px;background:#b0b0b0;border-radius:6px"></div>
<svg style="left:0;top:0" width="2592" height="1657"><path d="M90 349.5 H337.5" stroke="#ea9a3a" stroke-width="3" stroke-linecap="round"/></svg>
<div class="a" style="left:-0.2px;top:301.4px;width:96.2px;height:96.2px;background:#ea9a3a;border-radius:50%"></div>
<svg style="left:0;top:329.5px" width="97" height="40" viewBox="0 329.5 97 40"><path d="M37.6 336.9 L53.4 331.6 V366.3 H45.6 V340.1 L37.6 342.1Z" fill="#fff"/></svg>
<svg style="left:0;top:0" width="2592" height="1657"><path d="M90 602.7 H337.5" stroke="#ea9a3a" stroke-width="3" stroke-linecap="round"/></svg>
<div class="a" style="left:-0.2px;top:554.6px;width:96.2px;height:96.2px;background:#ea9a3a;border-radius:50%"></div>
<div class="t" style="left:34.30px;top:578.95px;font-size:48.87px;color:#fff;font-weight:bold">2</div>
<svg style="left:0;top:0" width="2592" height="1657"><path d="M90 771 H337.5" stroke="#ea9a3a" stroke-width="3" stroke-linecap="round"/></svg>
<div class="a" style="left:-0.2px;top:722.9px;width:96.2px;height:96.2px;background:#ea9a3a;border-radius:50%"></div>
<div class="t" style="left:34.30px;top:747.25px;font-size:48.87px;color:#fff;font-weight:bold">3</div>
<svg style="left:0;top:0" width="2592" height="1657"><path d="M90 943 H680.7" stroke="#ea9a3a" stroke-width="3" stroke-linecap="round"/></svg>
<div class="a" style="left:-0.2px;top:894.9px;width:96.2px;height:96.2px;background:#ea9a3a;border-radius:50%"></div>
<div class="t" style="left:34.30px;top:919.25px;font-size:48.87px;color:#fff;font-weight:bold">5</div>
<svg style="left:0;top:0" width="2592" height="1657"><path d="M90 1018 H337.5" stroke="#ea9a3a" stroke-width="3" stroke-linecap="round"/></svg>
<div class="a" style="left:-0.2px;top:969.9px;width:96.2px;height:96.2px;background:#ea9a3a;border-radius:50%"></div>
<div class="t" style="left:34.30px;top:994.25px;font-size:48.87px;color:#fff;font-weight:bold">4</div>
<svg style="left:0;top:0" width="2592" height="1657"><path d="M90 1337.7 H680.7" stroke="#ea9a3a" stroke-width="3" stroke-linecap="round"/></svg>
<div class="a" style="left:-0.2px;top:1289.6000000000001px;width:96.2px;height:96.2px;background:#ea9a3a;border-radius:50%"></div>
<div class="t" style="left:34.30px;top:1313.95px;font-size:48.87px;color:#fff;font-weight:bold">8</div>
<svg style="left:0;top:0" width="2592" height="1657"><path d="M90 1403.6 H337.5" stroke="#ea9a3a" stroke-width="3" stroke-linecap="round"/></svg>
<div class="a" style="left:-0.2px;top:1355.5px;width:96.2px;height:96.2px;background:#ea9a3a;border-radius:50%"></div>
<div class="t" style="left:34.30px;top:1379.85px;font-size:48.87px;color:#fff;font-weight:bold">6</div>
<svg style="left:0;top:0" width="2592" height="1657"><path d="M90 1511.9 H337.5" stroke="#ea9a3a" stroke-width="3" stroke-linecap="round"/></svg>
<div class="a" style="left:-0.2px;top:1463.8000000000002px;width:96.2px;height:96.2px;background:#ea9a3a;border-radius:50%"></div>
<div class="t" style="left:33.80px;top:1488.15px;font-size:48.87px;color:#fff;font-weight:bold">7</div>
</body></html>
